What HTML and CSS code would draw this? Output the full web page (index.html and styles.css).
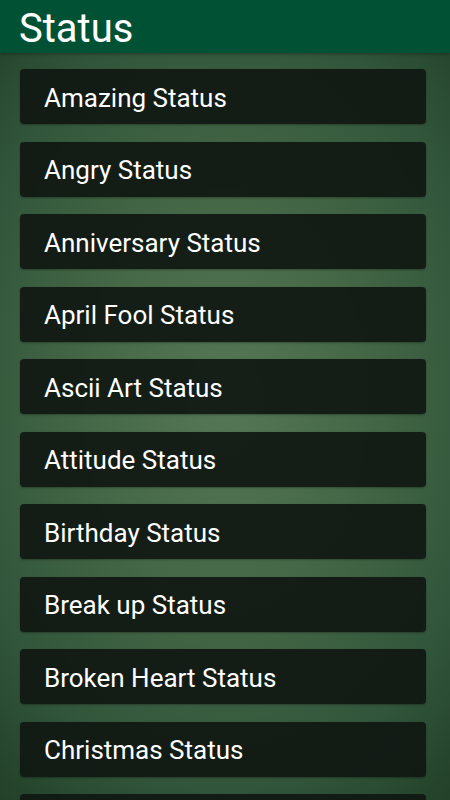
FILE: index.html
```html
<!DOCTYPE html>
<html>

<head>
  <title>Status</title>
  <link rel="stylesheet" href="styles.css">
</head>

<body>
  <div class="toolbar">
    <h1>Status</h1>
  </div>
  <ul class="category-list">
    <li><a href="#">Amazing Status</a></li>
    <li><a href="#">Angry Status</a></li>
    <li><a href="#">Anniversary Status</a></li>
    <li><a href="#">April Fool Status</a></li>
    <li><a href="#">Ascii Art Status</a></li>
    <li><a href="#">Attitude Status</a></li>
    <li><a href="#">Birthday Status</a></li>
    <li><a href="#">Break up Status</a></li>
    <li><a href="#">Broken Heart Status</a></li>
    <li><a href="#">Christmas Status</a></li>
    <li class="peek"></li>
  </ul>
</body>
</html>
```

FILE: styles.css
```css
html,
body {
  height: 100%;
}

body {
  margin: 0;
  font-family: Roboto, 'Noto Sans', sans-serif;
  background: radial-gradient(ellipse 85% 70% at 50% 50%, #557756 0%, #456847 35%, #31553a 70%, #1d3a21 100%);
  background-attachment: fixed;
  overflow: hidden;
}

.toolbar {
  height: 53px;
  background: #015234;
  display: flex;
  align-items: center;
  padding-left: 19px;
  box-shadow: 0 1px 3px rgba(0, 0, 0, 0.35);
}

.toolbar h1 {
  margin: 4px 0 0;
  font-size: 40px;
  font-weight: 400;
  color: #ffffff;
  line-height: 1;
}

.category-list {
  list-style: none;
  margin: 0;
  padding: 16px 24px 0 20px;
  display: flex;
  flex-direction: column;
  gap: 17.5px;
}

.category-list li {
  height: 55px;
  flex-shrink: 0;
  background: rgba(16, 24, 18, 0.93);
  border-radius: 4px;
  box-shadow: 0 1px 2px rgba(0, 0, 0, 0.3);
  display: flex;
  align-items: center;
}

.category-list a {
  color: #ffffff;
  text-decoration: none;
  font-size: 26px;
  padding-left: 24px;
  padding-top: 2px;
}
```
